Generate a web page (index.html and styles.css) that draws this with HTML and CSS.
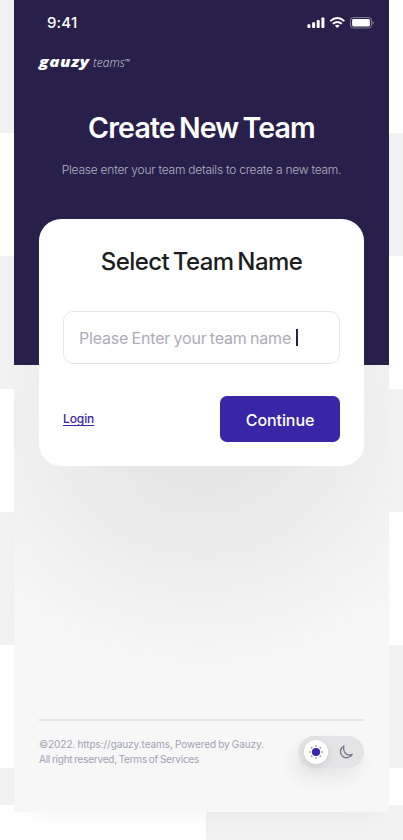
FILE: index.html
```html
<!DOCTYPE html>
<html lang="en">
<head>
<meta charset="utf-8">
<title>Create New Team</title>
<link rel="stylesheet" href="styles.css">
</head>
<body>
<main class="phone">
  <header class="hero">
    <div class="status">
      <span class="time">9:41</span>
      <svg class="status-icons" width="67" height="12" viewBox="0 0 67 12" fill="#fff">
        <rect x="0.4" y="7.3" width="3" height="3.7" rx=".8"/>
        <rect x="5.1" y="5.3" width="3" height="5.7" rx=".8"/>
        <rect x="9.7" y="3" width="3" height="8" rx=".8"/>
        <rect x="14.4" y="0.4" width="3" height="10.6" rx=".8"/>
        <g fill="none" stroke="#fff" stroke-width="1.9">
          <path d="M23.2 4.1Q30.3 -2 37.4 4.1"/>
          <path d="M25.8 6.8Q30.3 3 34.8 6.8"/>
        </g>
        <path d="M27.9 8.6Q30.3 6.9 32.7 8.6L30.3 11Z"/>
        <rect x="43.5" y=".5" width="21" height="10.5" rx="2.8" fill="none" stroke="#fff" stroke-opacity=".4"/>
        <rect x="45.1" y="2.1" width="17.8" height="7.3" rx="1.4"/>
        <path d="M65.6 4v3.8q1.2-.6 1.2-1.9t-1.2-1.9z" opacity=".45"/>
      </svg>
    </div>
    <div class="logo"><span class="brand">gauzy</span><span class="sub">teams</span><span class="tm">™</span></div>
    <h1 class="title">Create New Team</h1>
    <p class="lead">Please enter your team details to create a new team.</p>
  </header>
  <section class="card">
    <h2 class="card-title">Select Team Name</h2>
    <div class="field"><span class="placeholder">Please Enter your team name</span><span class="caret"></span></div>
    <div class="actions">
      <a class="login">Login</a>
      <button class="continue"><span>Continue</span></button>
    </div>
  </section>
  <footer class="footer">
    <div class="legal">
      <div class="legal-a">©2022. https://gauzy.teams, Powered by Gauzy.</div>
      <div class="legal-b">All right reserved, Terms of Services</div>
    </div>
    <div class="toggle">
      <span class="knob">
        <svg width="14" height="14" viewBox="0 0 14 14" fill="#3826a6">
          <circle cx="7" cy="7" r="4.1"/>
          <g opacity=".65"><circle cx="7" cy="1" r=".8"/><circle cx="7" cy="13" r=".8"/><circle cx="1" cy="7" r=".8"/><circle cx="13" cy="7" r=".8"/><circle cx="2.7" cy="2.7" r=".8"/><circle cx="11.3" cy="2.7" r=".8"/><circle cx="2.7" cy="11.3" r=".8"/><circle cx="11.3" cy="11.3" r=".8"/></g>
        </svg>
      </span>
      <svg class="moon" width="14" height="14" viewBox="0 0 14 14" fill="none" stroke="#7e7991" stroke-width="1.4" stroke-linejoin="round">
        <path d="M4.9 1A6.2 6.2 0 1 0 13.2 9.4C9.5 10.8 6.6 9.3 5.3 6.5C4.5 4.6 4.4 2.8 4.9 1Z"/>
      </svg>
    </div>
  </footer>
</main>
</body>
</html>
```
FILE: styles.css
```css
* { box-sizing: border-box; }
body {
  margin: 0;
  width: 403px;
  height: 840px;
  overflow: hidden;
  padding: 0 14px 28px;
  font-family: Inter, "Liberation Sans", sans-serif;
  background-color: #fff;
  background-image:
    linear-gradient(#f1f1f1, #f1f1f1),
    linear-gradient(#f1f1f1 133px, #fff 133px 256px, #f1f1f1 256px 389px, #fff 389px 512px, #f1f1f1 512px 645px, #fff 645px 768px, #f1f1f1 768px 805px, #fff 805px),
    linear-gradient(#fff 133px, #f1f1f1 133px 256px, #fff 256px 389px, #f1f1f1 389px 512px, #fff 512px 645px, #f1f1f1 645px 768px, #fff 768px 805px, #f1f1f1 805px);
  background-size: 197px 35px, 206px 840px, 197px 840px;
  background-position: 206px 805px, 0 0, 206px 0;
  background-repeat: no-repeat;
}
.phone {
  width: 375px;
  height: 812px;
  display: flex;
  flex-direction: column;
  background-color: #f7f7f7;
  /* Soft shade under the card, fading into the page */
  background-image: radial-gradient(ellipse 290px 260px at 50% 425px, rgba(0, 0, 0, .07), rgba(0, 0, 0, .064) 30%, rgba(0, 0, 0, .03) 64%, rgba(0, 0, 0, .007) 88%, rgba(0, 0, 0, 0));
  box-shadow: 0 16px 24px -16px rgba(0, 0, 0, .05);
}
.hero {
  height: 365px;
  flex: none;
  background: #28204a;
  color: #fff;
  text-align: center;
}
.status {
  height: 46px;
  padding: 0 15px 0 33px;
  display: flex;
  justify-content: space-between;
  align-items: center;
}
.time { font-size: 15px; font-weight: 550; line-height: 18px; letter-spacing: .15px; }
.logo {
  height: 32px;
  padding-left: 25px;
  display: flex;
  align-items: baseline;
  line-height: 31px;
  font-family: "Open Sans", "Noto Sans", sans-serif;
  font-style: italic;
  white-space: nowrap;
}
.brand {
  font-size: 14.5px;
  font-weight: 800;
  letter-spacing: .4px;
  width: 53px;
  text-align: left;
  transform: scaleX(1.17);
  transform-origin: left;
}
.sub { font-size: 12px; font-weight: 300; color: #d0cedb; margin-left: 1px; }
.tm { font-size: 7px; font-style: normal; color: #d0cedb; position: relative; top: -3px; }
.title {
  margin: 30px 0 0;
  font-size: 28.5px;
  line-height: 40px;
  font-weight: 600;
  letter-spacing: -.85px;
  word-spacing: -2.2px;
  white-space: nowrap;
}
.lead {
  margin: 12px 0 0;
  font-size: 12px;
  line-height: 20px;
  font-weight: 300;
  letter-spacing: -.235px;
  color: #b3b0c0;
  white-space: nowrap;
}
.card {
  width: 325px;
  height: 247px;
  flex: none;
  margin: -146px 25px 0;
  padding: 27px 24px 24px;
  background: #fff;
  border-radius: 22px;
}
.card-title {
  margin: 0;
  text-align: center;
  font-size: 24px;
  line-height: 32px;
  font-weight: 500;
  letter-spacing: -.59px;
  word-spacing: -2px;
  color: #1b1d20;
  white-space: nowrap;
}
.field {
  margin-top: 33px;
  width: 277px;
  height: 53px;
  border: 1px solid #e7e7ea;
  border-radius: 10px;
  padding-left: 15px;
  display: flex;
  align-items: center;
}
.placeholder { font-size: 16px; font-weight: 400; letter-spacing: -.18px; word-spacing: -1px; color: #aeabba; width: 217px; white-space: nowrap; }
.caret { width: 2px; height: 17px; background: #28204a; }
.actions {
  margin-top: 32px;
  display: flex;
  justify-content: space-between;
  align-items: center;
}
.login {
  font-size: 12px;
  line-height: 14px;
  font-weight: 500;
  letter-spacing: -.1px;
  color: #3826a6;
  text-decoration: underline;
  text-decoration-thickness: 1px;
  text-underline-offset: 2px;
}
.continue {
  width: 120px;
  height: 46px;
  border: 0;
  border-radius: 7px;
  background: #3826a6;
  color: #fff;
  font: 500 16px/20px Inter, sans-serif;
  letter-spacing: -.08px;
  padding: 2px 0 0;
}
.footer {
  margin: 253px 25px 0;
  border-top: 2px solid #e4e4e5;
  display: flex;
  justify-content: space-between;
  padding-top: 15px;
}
.legal { font-size: 10px; line-height: 15px; color: #a3a0b2; white-space: nowrap; padding-top: 1px; }
.legal-a, .legal-b { width: max-content; }
.legal-a { letter-spacing: -.06px; word-spacing: -.6px; }
.legal-b { letter-spacing: -.24px; word-spacing: -.7px; }
.toggle {
  width: 66px;
  height: 32px;
  border-radius: 16px;
  background: #e4e4e7;
  padding: 4px 11px 4px 6px;
  display: flex;
  align-items: center;
  justify-content: space-between;
  box-shadow: -4px 10px 18px rgba(0, 0, 0, .07);
}
.knob {
  width: 24px;
  height: 24px;
  border-radius: 50%;
  background: #fff;
  display: flex;
  align-items: center;
  justify-content: center;
  box-shadow: 0 3px 9px rgba(0, 0, 0, .1);
}
```
